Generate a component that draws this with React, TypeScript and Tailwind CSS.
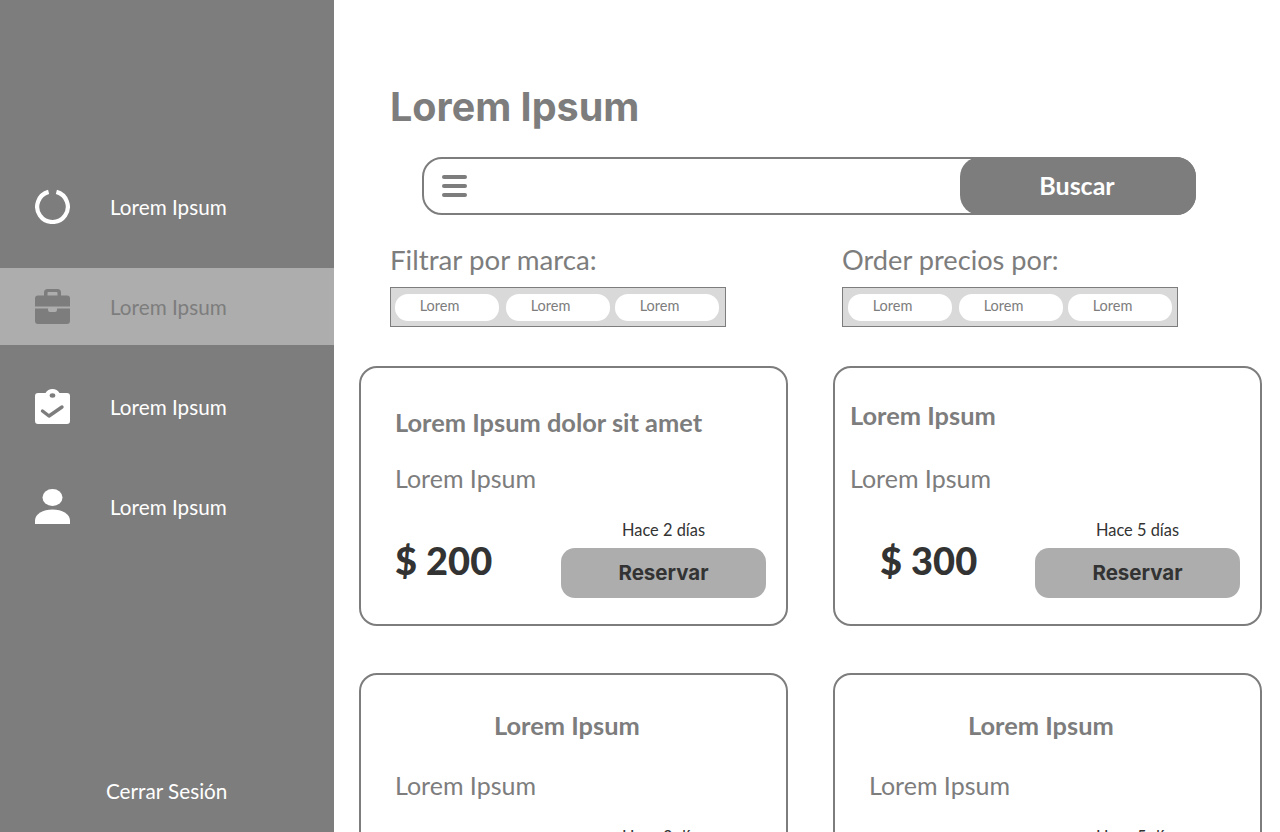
import React from 'react';

const navItems = [
  { label: 'Lorem Ipsum', icon: 'ring' },
  { label: 'Lorem Ipsum', icon: 'briefcase', active: true },
  { label: 'Lorem Ipsum', icon: 'clipboard' },
  { label: 'Lorem Ipsum', icon: 'user' },
];

const cards = [
  { title: 'Lorem Ipsum dolor sit amet', titleClass: 'pt-[37px] pl-[34px]', subClass: 'pl-[34px]', price: '$ 200', priceClass: 'ml-[34px]', ago: 'Hace 2 días' },
  { title: 'Lorem Ipsum', titleClass: 'pt-[30px] pl-[15px]', subClass: 'pl-[15px]', price: '$ 300', priceClass: 'ml-[45px]', ago: 'Hace 5 días' },
  { title: 'Lorem Ipsum', titleClass: 'pt-[33px] pl-[133px]', subClass: 'pl-[34px]', price: '$ 200', priceClass: 'ml-[34px]', ago: 'Hace 2 días' },
  { title: 'Lorem Ipsum', titleClass: 'pt-[33px] pl-[133px]', subClass: 'pl-[34px]', price: '$ 300', priceClass: 'ml-[45px]', ago: 'Hace 5 días' },
];

function NavIcon({ name }: { name: string }) {
  if (name === 'ring') {
    return (
      <svg width="35" height="35" viewBox="0 0 35 35" fill="none">
        <path d="M13.6 2.9 A15.3 15.3 0 1 0 21.4 2.9" stroke="#fff" strokeWidth="4.2" />
      </svg>
    );
  }
  if (name === 'briefcase') {
    return (
      <svg width="35" height="35" viewBox="0 0 35 35" fill="#7d7d7d">
        <path fillRule="evenodd" d="M9 6.5 V3.5 A3.5 3.5 0 0 1 12.5 0 h10 A3.5 3.5 0 0 1 26 3.5 v3 h6 a3 3 0 0 1 3 3 V17.5 H0 V9.5 a3 3 0 0 1 3 -3 Z M12.5 6.5 h10 V4 a1 1 0 0 0 -1 -1 h-8 a1 1 0 0 0 -1 1 Z" />
        <path d="M0 19.5 h13 v1.5 a2 2 0 0 0 2 2 h5 a2 2 0 0 0 2 -2 v-1.5 h13 V32 a3 3 0 0 1 -3 3 H3 a3 3 0 0 1 -3 -3 Z" />
      </svg>
    );
  }
  if (name === 'clipboard') {
    return (
      <svg width="35" height="35" viewBox="0 0 35 35">
        <path fill="#fff" d="M3 4 h7.5 C12 1.5 14.5 0 17.5 0 S23 1.5 24.5 4 h7.5 a3 3 0 0 1 3 3 V32 a3 3 0 0 1 -3 3 H3 a3 3 0 0 1 -3 -3 V7 a3 3 0 0 1 3 -3 Z" />
        <ellipse cx="17.5" cy="6.5" rx="2.8" ry="2.2" fill="#7d7d7d" />
        <path d="M7.5 22 L14 27 L27 18" fill="none" stroke="#7d7d7d" strokeWidth="3.4" strokeLinecap="round" strokeLinejoin="round" />
      </svg>
    );
  }
  return (
    <svg width="35" height="35" viewBox="0 0 35 35" fill="#fff">
      <ellipse cx="17.5" cy="8.5" rx="10" ry="8.5" />
      <path d="M0 35 V31.5 C0 25 8 20.5 17.5 20.5 S35 25 35 31.5 V35 Z" />
    </svg>
  );
}

function Chips({ className }: { className: string }) {
  return (
    <div className={`flex h-10 w-[336px] items-center border border-[#7d7d7d] bg-[#d9d9d9] ${className}`}>
      <span className="flex h-[27px] w-[104px] items-center justify-center rounded-[13px] bg-white pr-[15px] pb-[2px] text-[14.5px] text-[#7d7d7d]">Lorem</span>
      <span className="ml-[7px] flex h-[27px] w-[104px] items-center justify-center rounded-[13px] bg-white pr-[15px] pb-[2px] text-[14.5px] text-[#7d7d7d]">Lorem</span>
      <span className="ml-[5px] flex h-[27px] w-[104px] items-center justify-center rounded-[13px] bg-white pr-[15px] pb-[2px] text-[14.5px] text-[#7d7d7d]">Lorem</span>
    </div>
  );
}

export default function App() {
  return (
    <div className="flex h-[832px] w-[1280px] overflow-hidden bg-white font-['Lato',sans-serif]">
      {/* Sidebar */}
      <aside className="flex w-[334px] shrink-0 flex-col bg-[#7d7d7d] pt-[168px]">
        <nav className="flex flex-col gap-[23px]">
          {navItems.map((item, i) => (
            <a
              key={i}
              className={`flex h-[77px] items-center pl-[35px] text-[20.7px] ${item.active ? 'bg-[#adadad] text-[#7d7d7d]' : 'text-white'}`}
            >
              <NavIcon name={item.icon} />
              <span className="mt-[2px] ml-[40px]">{item.label}</span>
            </a>
          ))}
        </nav>
        <div className="mt-auto pb-[27px] pl-[106px] text-[20.7px] leading-7 text-white">Cerrar Sesión</div>
      </aside>

      {/* Main */}
      <main className="flex-1 pt-[82px] pl-[25px]">
        <h1 className="ml-[31px] font-['Inter',sans-serif] text-[39.5px] leading-[50px] font-bold text-[#7d7d7d]">Lorem Ipsum</h1>

        <div className="relative mt-[25px] ml-[63px] flex h-[58px] w-[774px] items-center rounded-[20px] border-2 border-[#7d7d7d] pl-[18px]">
          <svg width="26" height="24" viewBox="0 0 26 24" fill="#7d7d7d">
            <rect x="0" y="1" width="25" height="4" rx="2" />
            <rect x="0" y="10" width="25" height="4" rx="2" />
            <rect x="0" y="19" width="25" height="4" rx="2" />
          </svg>
          <button className="absolute -top-[2px] -right-[2px] h-[58px] w-[236px] rounded-[20px] bg-[#7d7d7d] pr-[2px] text-[25px] font-bold text-white">Buscar</button>
        </div>

        <div className="mt-[26px] ml-[31px] flex gap-[116px]">
          <div>
            <p className="mb-[8px] text-[27.7px] leading-[38px] text-[#7d7d7d]">Filtrar por marca:</p>
            <Chips className="pl-1" />
          </div>
          <div>
            <p className="mb-[8px] text-[27.2px] leading-[38px] text-[#7d7d7d]">Order precios por:</p>
            <Chips className="pl-[5px]" />
          </div>
        </div>

        <div className="mt-[39px] grid w-[903px] grid-cols-[429px_429px] gap-x-[45px] gap-y-[47px]">
          {cards.map((card, i) => (
            <div key={i} className="h-[260px] rounded-[18px] border-2 border-[#7d7d7d]">
              <div className={`h-[94px] ${card.titleClass}`}>
                <h3 className="text-[25.4px] leading-[34px] font-bold text-[#7d7d7d]">{card.title}</h3>
              </div>
              <p className={`pb-[2px] text-[25px] leading-[32px] text-[#7d7d7d] ${card.subClass}`}>Lorem Ipsum</p>
              <div className="mt-[22px] flex items-end pr-5">
                <span className={`mb-[13px] text-[38px] leading-[50px] font-black text-[#333333] ${card.priceClass}`}>{card.price}</span>
                <div className="ml-auto w-[205px] text-center">
                  <p className="text-[16.4px] leading-6 text-[#333333]">{card.ago}</p>
                  <button className="mt-1.5 h-[50px] w-full rounded-[14px] bg-[#adadad] font-['Inter',sans-serif] text-[20.5px] font-bold text-[#333333]">Reservar</button>
                </div>
              </div>
            </div>
          ))}
        </div>
      </main>
    </div>
  );
}
